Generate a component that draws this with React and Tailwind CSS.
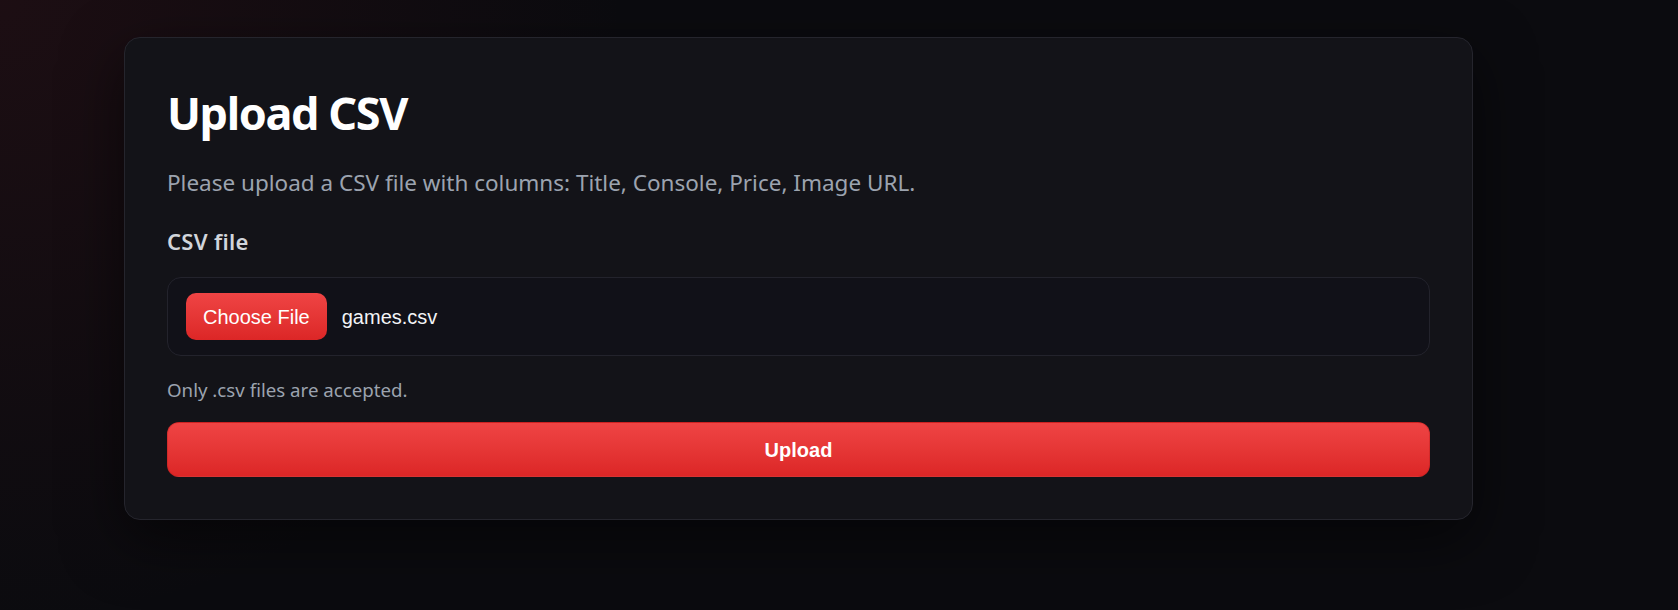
export default function App() {
  const sans = { fontFamily: '"Noto Sans", "Open Sans", sans-serif' };
  return (
    <div className="min-h-[610px] w-full bg-[#0b0b0f] bg-[radial-gradient(circle_at_0%_0%,rgba(120,30,40,0.16),transparent_35%)] pl-[124px] pt-[37px]">
      <div
        className="w-[1349px] rounded-2xl border border-[#25252d] bg-[#131318] p-[42px] shadow-[0_20px_60px_rgba(0,0,0,0.55)]"
        style={sans}
      >
        <h1 className="text-[45px] font-bold leading-[66px] text-white tracking-[-1.4px]">Upload CSV</h1>
        <p className="mt-[19px] text-[22.5px] leading-[36px] text-[#9ca3af]">
          Please upload a CSV file with columns: Title, Console, Price, Image URL.
        </p>
        <div className="mt-[25px] text-[22px] font-semibold leading-[31px] text-[#d1d5db] tracking-[0.3px]">CSV file</div>
        <div className="mt-[20px] flex items-center rounded-[14px] border border-[#23232c] bg-[#111118] py-[15px] pl-[18px] pr-[18px]">
          <div
            className="flex h-[47px] items-center rounded-[10px] bg-gradient-to-b from-[#ef4444] to-[#dc2626] px-[17px] text-[20px] text-white"
            style={{ fontFamily: '"Liberation Sans", Arial, sans-serif' }}
          >
            Choose File
          </div>
          <span
            className="ml-[15px] text-[20px] text-[#f3f4f6]"
            style={{ fontFamily: '"Liberation Sans", Arial, sans-serif' }}
          >
            games.csv
          </span>
        </div>
        <div className="mt-[20px] text-[18.7px] leading-[27px] text-[#9ca3af]">Only .csv files are accepted.</div>
        <button
          className="mt-[19px] flex h-[55px] w-full items-center justify-center rounded-xl border border-[#b91c1c]/40 bg-gradient-to-b from-[#ef4444] to-[#dc2626] text-[20px] font-bold text-white"
          style={{ fontFamily: '"Liberation Sans", Arial, sans-serif' }}
        >
          Upload
        </button>
      </div>
      <div className="h-[54px]" />
    </div>
  );
}
